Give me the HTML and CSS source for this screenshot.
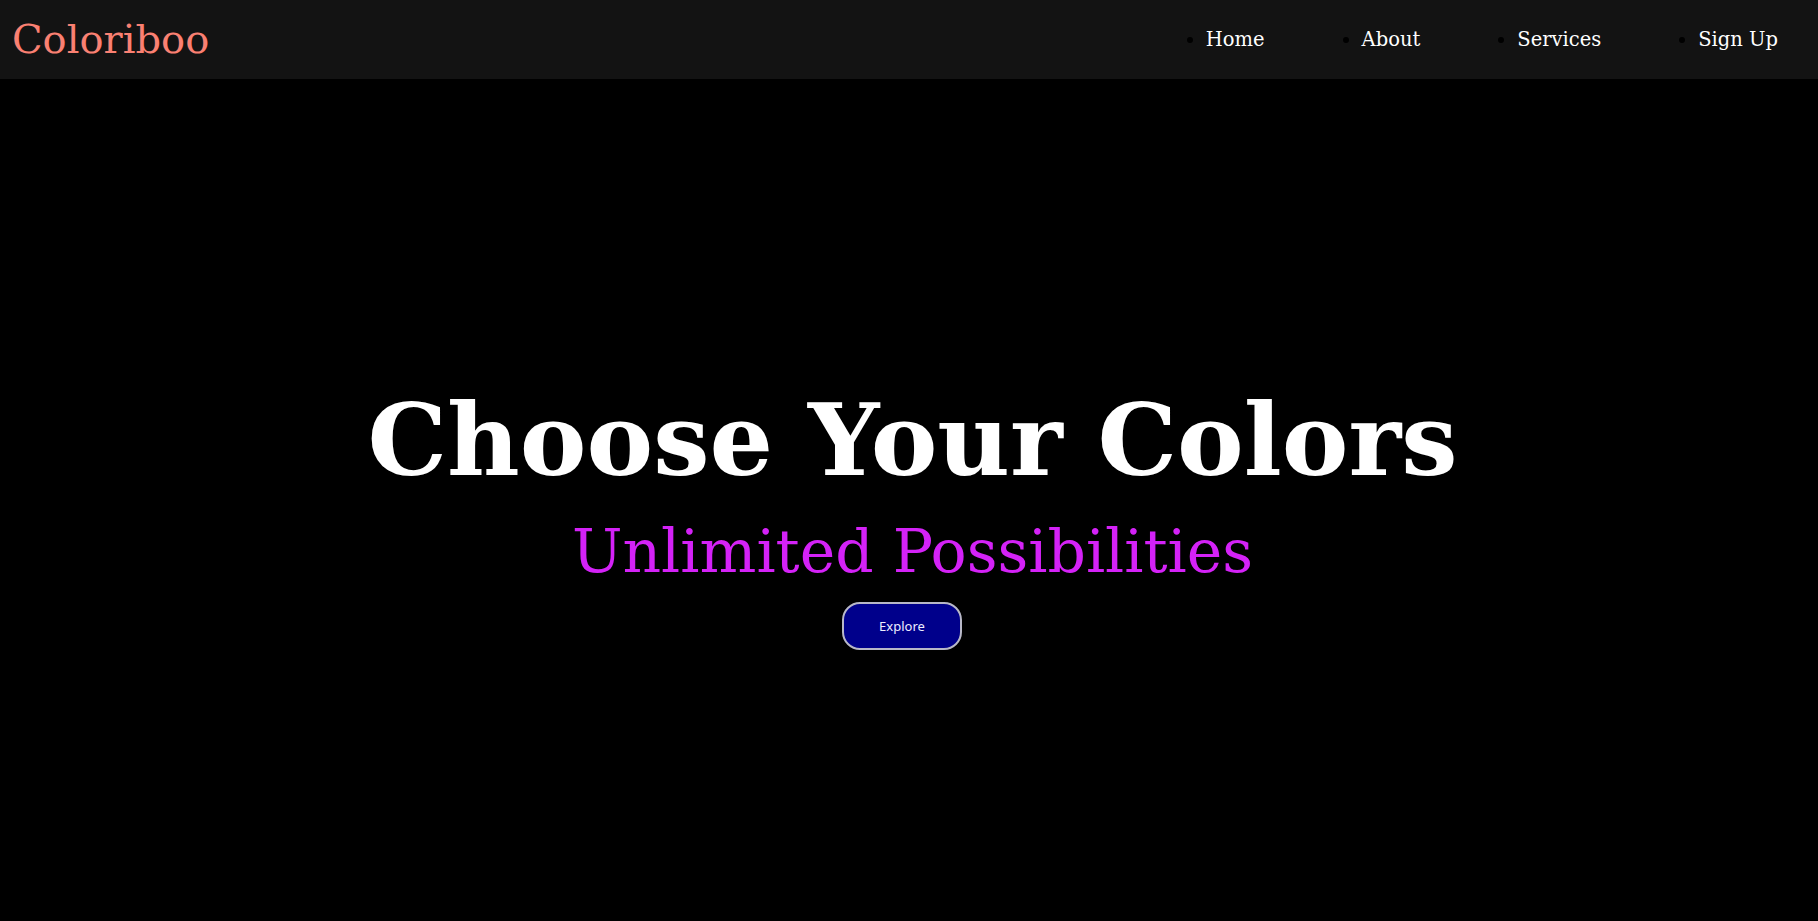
FILE: index.html
```html
<!DOCTYPE html>
<html lang="en">
<head>
<meta charset="utf-8">
<title>Coloriboo</title>
<link rel="stylesheet" href="styles.css">
</head>
<body>
<header class="topbar">
  <div class="logo">Coloriboo</div>
  <nav>
    <ul class="nav-list">
      <li><a href="#">Home</a></li>
      <li><a href="#">About</a></li>
      <li><a href="#">Services</a></li>
      <li><a href="#">Sign Up</a></li>
    </ul>
  </nav>
</header>
<main class="hero">
  <h1 class="hero-title">Choose Your Colors</h1>
  <p class="hero-sub">Unlimited Possibilities</p>
  <button class="explore">Explore</button>
</main>
</body>
</html>
```
FILE: styles.css
```css
html, body {
  margin: 0;
  padding: 0;
  background: #000;
  font-family: "DejaVu Serif", serif;
}

.topbar {
  height: 79px;
  background: #131313;
  display: flex;
  align-items: center;
  justify-content: space-between;
}

.logo {
  color: #fa8072;
  font-size: 40px;
  margin-left: 12px;
  padding-bottom: 2px;
}

.nav-list {
  display: flex;
  margin: 0;
  padding: 0 40px 0 0;
  gap: 97px;
  list-style: disc;
  color: #000;
}

.nav-list li {
  font-size: 19.5px;
}

.nav-list a {
  color: #fff;
  text-decoration: none;
}

.hero {
  height: 842px;
  box-sizing: border-box;
  padding: 303px 0 0 7px;
  display: flex;
  flex-direction: column;
  align-items: center;
}

.hero-title {
  margin: 0;
  color: #fff;
  font-size: 100px;
  font-weight: bold;
  line-height: 116px;
}

.hero-sub {
  margin: 18px 0 0;
  color: #d422f7;
  font-size: 60px;
  line-height: 70px;
}

.explore {
  margin: 16px 21px 0 0;
  width: 120px;
  height: 48px;
  background: #00008b;
  color: #eef;
  border: 2px solid #b8b8c8;
  border-radius: 18px;
  font-family: "Noto Sans", sans-serif;
  font-size: 13px;
}
```
